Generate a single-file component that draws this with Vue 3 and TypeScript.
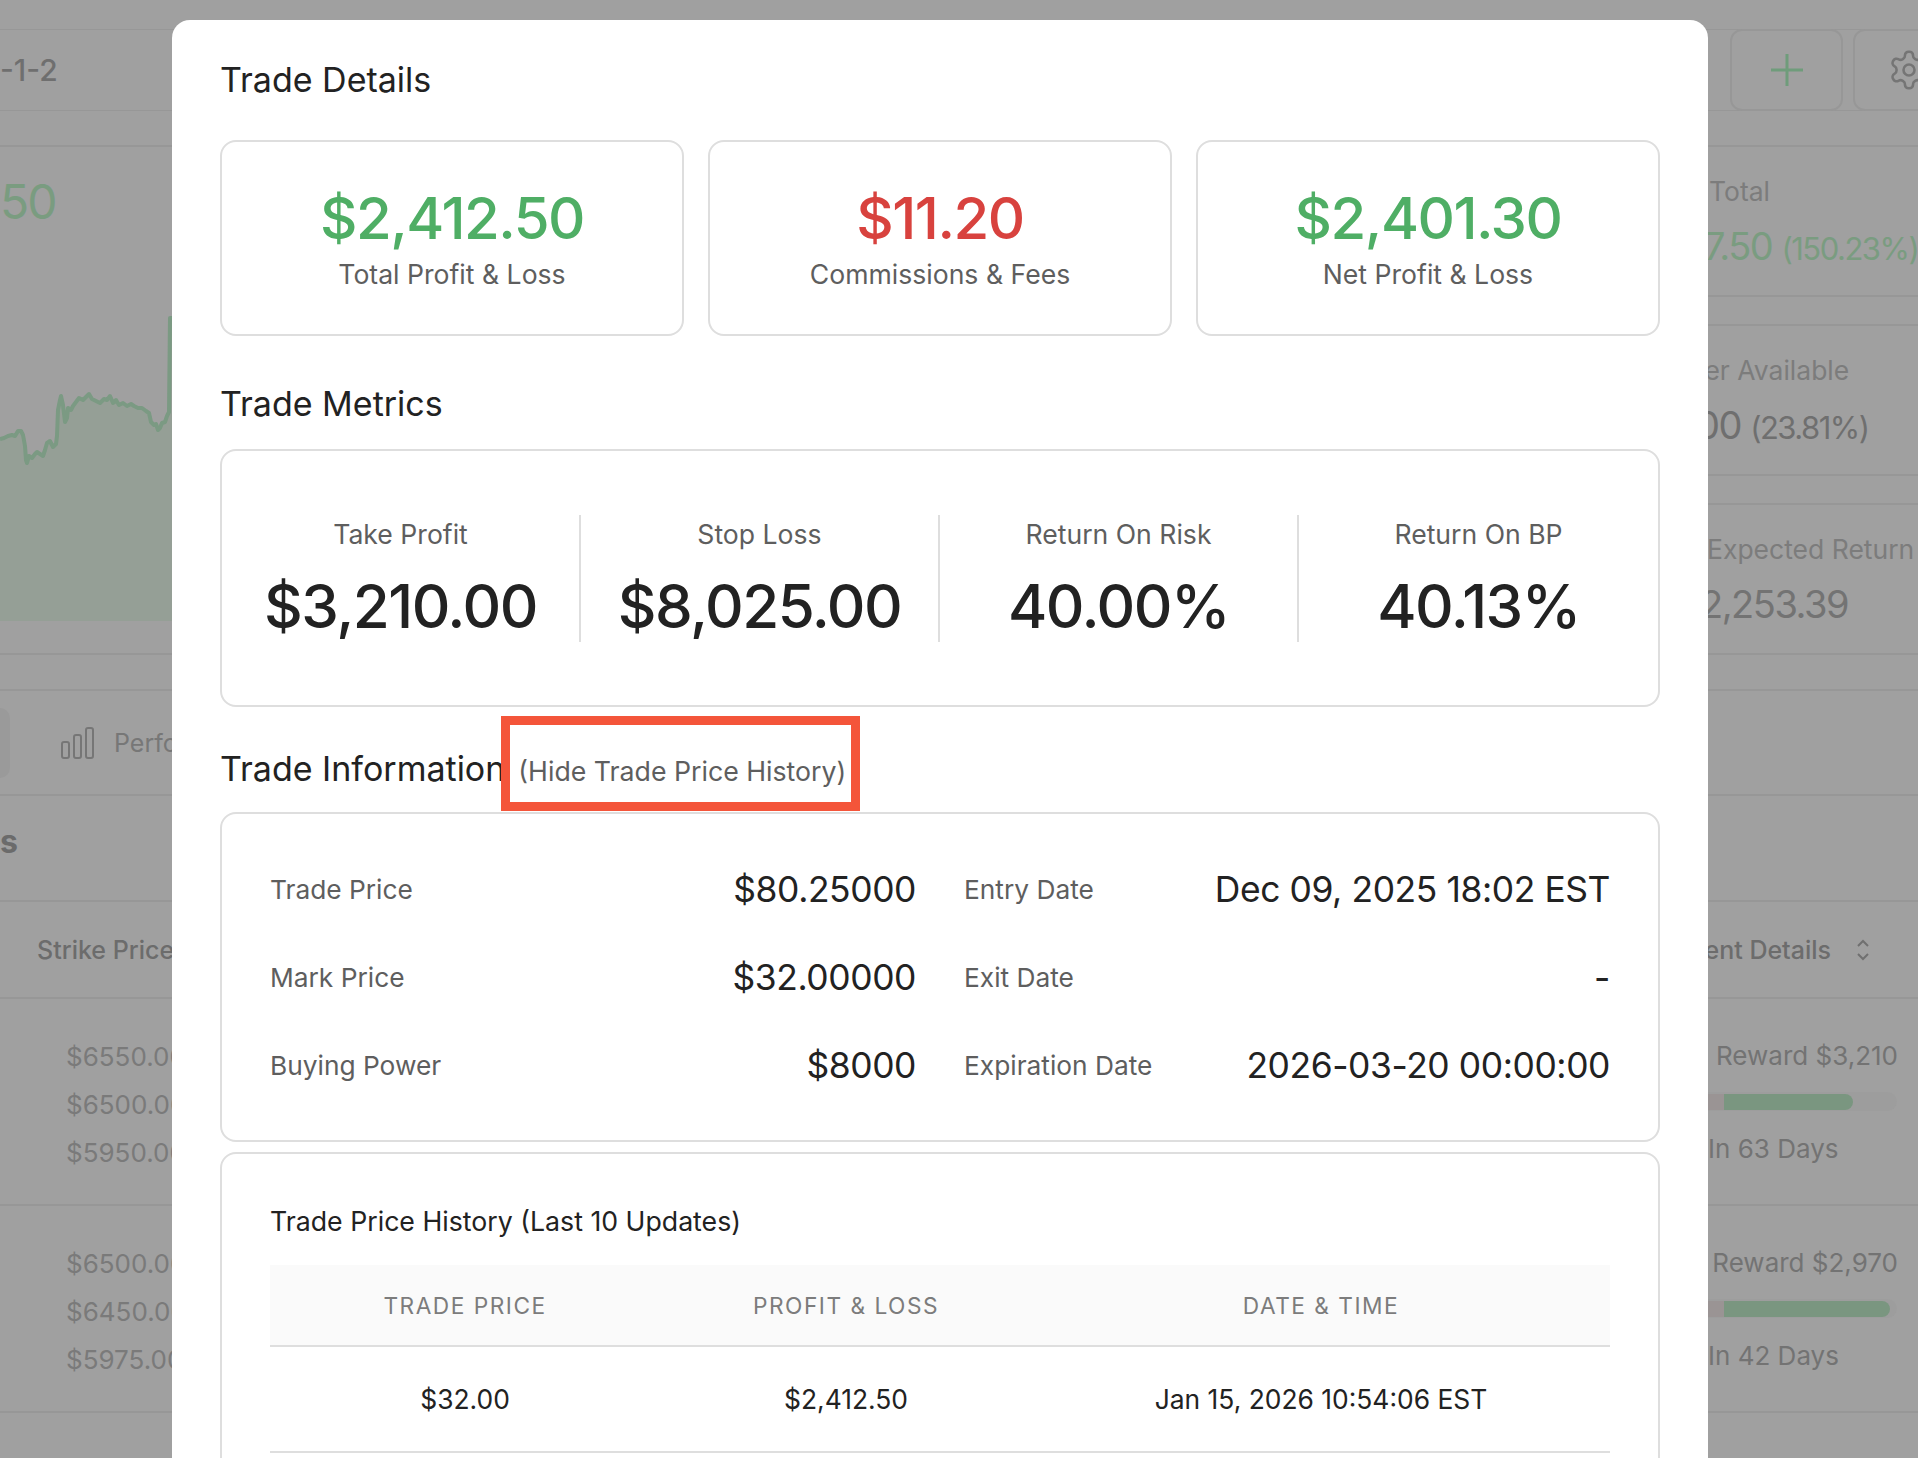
<script setup lang="ts">
interface Stat { label: string; value: string; note?: string; tone: string }
const summary = [
  { value: '$2,412.50', label: 'Total Profit & Loss', tone: 'green' },
  { value: '$11.20', label: 'Commissions & Fees', tone: 'red' },
  { value: '$2,401.30', label: 'Net Profit & Loss', tone: 'green' },
]
const metrics = [
  { label: 'Take Profit', value: '$3,210.00' },
  { label: 'Stop Loss', value: '$8,025.00' },
  { label: 'Return On Risk', value: '40.00%' },
  { label: 'Return On BP', value: '40.13%' },
]
const info = [
  { label: 'Trade Price', value: '$80.25000' },
  { label: 'Entry Date', value: 'Dec 09, 2025 18:02 EST' },
  { label: 'Mark Price', value: '$32.00000' },
  { label: 'Exit Date', value: '-' },
  { label: 'Buying Power', value: '$8000' },
  { label: 'Expiration Date', value: '2026-03-20 00:00:00' },
]
const stats: Stat[] = [
  { label: 'Total', value: '7.50', note: '(150.23%)', tone: 'stat-a' },
  { label: 'Power Available', value: '00', note: '(23.81%)', tone: 'stat-b' },
  { label: 'Expected Return', value: '2,253.39', tone: 'stat-c' },
]
const strikes = [
  ['$6550.00', '$6500.00', '$5950.00'],
  ['$6500.00', '$6450.00', '$5975.00'],
]
const rewards = [
  { reward: 'Reward $3,210', days: 'In 63 Days', fill: 129 },
  { reward: 'Reward $2,970', days: 'In 42 Days', fill: 166 },
]
const linePts = '0,439 4,438 8,436 12,435 15,436 18,431 21,431 23,435 25,446 26,460 27,463 29,456 32,458 35,454 37,452 40,454 43,456 45,450 47,443 50,441 53,447 56,444 57,436 58,410 60,400 61,396 63,405 65,422 67,418 68,408 71,410 73,406 76,402 79,398 83,400 86,397 89,394 92,399 96,401 100,403 104,399 107,400 110,396 113,403 116,400 119,405 123,403 127,406 131,404 134,406 138,408 142,408 146,411 149,413 151,422 154,425 156,424 158,430 160,428 162,423 165,422 167,416 169,412 170,318 172,318'
const fillPts = `${linePts} 172,621 0,621`
</script>

<template>
  <div class="page">
    <div class="backdrop">
      <header class="topbar">
        <div class="crumb">-1-2</div>
        <div class="tools">
          <div class="tool">
            <svg width="36" height="36" viewBox="0 0 36 36"><path d="M18 2v32M2 18h32" fill="none" stroke="#6f9c7b" stroke-width="3" /></svg>
          </div>
          <div class="tool gear">
            <svg width="44" height="44" viewBox="0 0 24 24" fill="none" stroke="#757575" stroke-width="1.4" stroke-linecap="round" stroke-linejoin="round"><path d="M12.2 2h-.4a2 2 0 0 0-2 2v.2a2 2 0 0 1-1 1.7l-.4.3a2 2 0 0 1-2 0l-.2-.1a2 2 0 0 0-2.7.7l-.2.4a2 2 0 0 0 .7 2.7l.2.1a2 2 0 0 1 1 1.7v.5a2 2 0 0 1-1 1.8l-.2.1a2 2 0 0 0-.7 2.7l.2.4a2 2 0 0 0 2.7.7l.2-.1a2 2 0 0 1 2 0l.4.3a2 2 0 0 1 1 1.7v.2a2 2 0 0 0 2 2h.4a2 2 0 0 0 2-2v-.2a2 2 0 0 1 1-1.7l.4-.3a2 2 0 0 1 2 0l.2.1a2 2 0 0 0 2.7-.7l.2-.4a2 2 0 0 0-.7-2.7l-.2-.1a2 2 0 0 1-1-1.8v-.5a2 2 0 0 1 1-1.7l.2-.1a2 2 0 0 0 .7-2.7l-.2-.4a2 2 0 0 0-2.7-.7l-.2.1a2 2 0 0 1-2 0l-.4-.3a2 2 0 0 1-1-1.7V4a2 2 0 0 0-2-2z" /><circle cx="12" cy="12" r="3" /></svg>
          </div>
        </div>
      </header>

      <section class="overview">
        <div class="chart-panel">
          <div class="hero">50</div>
          <svg class="chart" width="172" height="476" viewBox="0 145 172 476">
            <polygon :points="fillPts" fill="#959f96" />
            <polyline :points="linePts" fill="none" stroke="#7b9a83" stroke-width="4" stroke-linejoin="round" />
          </svg>
        </div>
        <div class="stats">
          <div v-for="s in stats" :key="s.label" class="stat" :class="s.tone">
            <div class="stat-label">{{ s.label }}</div>
            <div class="stat-value">{{ s.value }} <span v-if="s.note" class="stat-note">{{ s.note }}</span></div>
          </div>
        </div>
      </section>

      <nav class="tabs">
        <div class="tab-active"></div>
        <svg class="tab-icon" width="33" height="32" viewBox="0 0 33 32" fill="none" stroke="#767676" stroke-width="2"><rect x="1" y="15" width="7" height="16" rx="2" /><rect x="13" y="8" width="7" height="23" rx="2" /><rect x="25" y="1" width="7" height="30" rx="2" /></svg>
        <span class="tab-text">Performance</span>
      </nav>

      <div class="section-row">s</div>

      <div class="table-head">
        <span class="th-left">Strike Price</span>
        <span class="th-right">ent Details
          <svg width="16" height="24" viewBox="0 0 16 24" fill="none" stroke="#707070" stroke-width="2"><path d="M3 8l5-5 5 5M3 16l5 5 5-5" /></svg>
        </span>
      </div>

      <div v-for="(row, i) in strikes" :key="i" class="pos-row">
        <div class="strikes">
          <div v-for="(p, j) in row" :key="j">{{ p }}</div>
        </div>
        <div class="reward">
          <div class="reward-text">{{ rewards[i].reward }}</div>
          <div class="track"><span class="pink"></span><span class="fill" :style="{ width: rewards[i].fill + 'px' }"></span></div>
          <div class="days">{{ rewards[i].days }}</div>
        </div>
      </div>
    </div>

    <main class="modal">
      <h2 class="title first">Trade Details</h2>
      <div class="summary">
        <div v-for="c in summary" :key="c.label" class="card sum-card">
          <div class="big" :class="c.tone">{{ c.value }}</div>
          <div class="sum-label">{{ c.label }}</div>
        </div>
      </div>

      <h2 class="title metrics-title">Trade Metrics</h2>
      <div class="card metrics">
        <div v-for="m in metrics" :key="m.label" class="metric">
          <div class="metric-label">{{ m.label }}</div>
          <div class="big">{{ m.value }}</div>
        </div>
      </div>

      <div class="info-head">
        <h2 class="title">Trade Information</h2>
        <span class="toggle">(Hide Trade Price History)</span>
        <div class="annotation"></div>
      </div>
      <div class="card info">
        <div v-for="r in info" :key="r.label" class="info-row">
          <span class="info-label">{{ r.label }}</span>
          <span class="info-value">{{ r.value }}</span>
        </div>
      </div>

      <div class="card history">
        <div class="history-title">Trade Price History (Last 10 Updates)</div>
        <div class="grid-row grid-head">
          <span>TRADE PRICE</span><span>PROFIT &amp; LOSS</span><span>DATE &amp; TIME</span>
        </div>
        <div class="grid-row grid-body">
          <span>$32.00</span><span>$2,412.50</span><span>Jan 15, 2026 10:54:06 EST</span>
        </div>
      </div>
    </main>
  </div>
</template>

<style>
html, body { margin: 0; background: #a0a0a0; }
</style>

<style scoped>
.page {
  position: relative;
  width: 1918px;
  height: 1458px;
  overflow: hidden;
  background: #a0a0a0;
  font-family: Inter, Roboto, sans-serif;
  color: #707070;
}
.backdrop { padding-top: 29px; }
.topbar {
  display: flex;
  justify-content: space-between;
  align-items: center;
  height: 80px;
  border-top: 1px solid #979797;
  border-bottom: 1px solid #979797;
}
.crumb { font-size: 30px; font-weight: 500; color: #6f6f6f; }
.tools { display: flex; gap: 10px; margin-right: -48px; }
.tool {
  width: 113px;
  height: 82px;
  border: 2px solid #979797;
  border-radius: 12px;
  box-sizing: border-box;
  display: flex;
  align-items: center;
  justify-content: center;
}
.gear { justify-content: flex-start; padding-left: 32px; }
.overview {
  display: flex;
  justify-content: space-between;
  height: 510px;
  margin-top: 34px;
}
.chart-panel {
  position: relative;
  flex: 1;
  border-top: 2px solid #979797;
  border-bottom: 2px solid #979797;
  box-sizing: border-box;
  height: 510px;
}
.hero {
  font-size: 48px;
  font-weight: 400;
  line-height: 56px;
  margin-top: 27px;
  letter-spacing: -2px;
  color: #7a9c80;
}
.chart { position: absolute; left: 0; top: -2px; }
.stats {
  width: 210px;
  display: flex;
  flex-direction: column;
  gap: 27px;
  white-space: nowrap;
}
.stat {
  flex: 1;
  border-top: 2px solid #979797;
  border-bottom: 2px solid #979797;
  padding-top: 28px;
}
.stat-label { font-size: 26.5px; line-height: 32px; color: #7c7c7c; }
.stat-value { font-size: 38px; line-height: 48px; margin-top: 15px; color: #6f6f6f; letter-spacing: -1.5px; }
.stat-note { font-size: 31px; letter-spacing: -1.5px; }
.stat-a .stat-label { margin-left: 1px; }
.stat-a .stat-value, .stat-a .stat-note { color: #7a9c80; }
.stat-a .stat-value { margin-left: -4px; }
.stat-b .stat-label { margin-left: -57px; }
.stat-b .stat-value { margin-left: -12px; }
.stat-c .stat-label { margin-left: -1px; }
.stat-c .stat-value { margin-left: -8px; color: #737373; }
.tabs {
  display: flex;
  align-items: center;
  height: 107px;
  margin-top: 34px;
  border-top: 2px solid #979797;
  border-bottom: 2px solid #979797;
  box-sizing: border-box;
}
.tab-active {
  width: 10px;
  height: 70px;
  background: #9a9a9a;
  border-radius: 0 14px 14px 0;
}
.tab-icon { margin-left: 51px; }
.tab-text { margin-left: 20px; font-size: 25px; color: #777; }
.section-row {
  height: 106px;
  line-height: 92px;
  font-size: 32px;
  font-weight: 700;
  color: #6b6b6b;
  border-bottom: 2px solid #979797;
  box-sizing: border-box;
}
.table-head {
  display: flex;
  justify-content: space-between;
  align-items: center;
  height: 97px;
  border-bottom: 2px solid #979797;
  box-sizing: border-box;
  font-size: 25px;
  font-weight: 500;
  color: #6c6c6c;
}
.th-left { margin-left: 37px; }
.th-right { display: flex; align-items: center; gap: 24px; margin-right: 47px; }
.pos-row {
  display: flex;
  justify-content: space-between;
  height: 207px;
  border-bottom: 2px solid #979797;
  box-sizing: border-box;
}
.strikes {
  padding: 34px 0 0 66px;
  font-size: 26px;
  line-height: 48px;
  color: #7a7a7a;
}
.reward { width: 210px; padding-top: 41px; box-sizing: border-box; }
.reward-text { font-size: 26px; line-height: 32px; text-align: right; padding-right: 20px; color: #737373; white-space: nowrap; }
.track {
  display: flex;
  align-items: center;
  height: 19px;
  margin: 20px 21px 0 0;
  background: #9d9d9d;
  border-radius: 0 10px 10px 0;
}
.pink { width: 16px; height: 16px; background: #9a9494; }
.fill { height: 16px; background: #7a9680; border-radius: 0 8px 8px 0; }
.days { font-size: 26px; line-height: 32px; margin-top: 22px; color: #737373; }

.modal {
  position: absolute;
  left: 172px;
  top: 20px;
  width: 1536px;
  height: 1500px;
  padding: 40px 48px 0;
  box-sizing: border-box;
  background: #fff;
  border-radius: 18px 18px 0 0;
  color: #222;
}
.title {
  margin: 41px 0 25px;
  font-size: 34px;
  font-weight: 400;
  line-height: 40px;
  color: #222;
}
.title.first { margin: 0 0 40px; }
.title.metrics-title { margin-top: 48px; }
.card {
  border: 2px solid #dedede;
  border-radius: 16px;
  box-sizing: border-box;
  background: #fff;
}
.summary { display: grid; grid-template-columns: repeat(3, 1fr); gap: 24px; }
.sum-card {
  height: 196px;
  display: flex;
  flex-direction: column;
  align-items: center;
  padding-top: 41px;
}
.big { font-size: 58px; font-weight: 500; line-height: 70px; letter-spacing: -1.5px; color: #222; }
.big.green { color: #4fae65; }
.big.red { color: #d8423e; }
.sum-label { font-size: 26.6px; line-height: 32px; margin-top: 5px; color: #5e5e5e; }
.metrics {
  display: grid;
  grid-template-columns: repeat(4, 1fr);
  height: 258px;
  align-items: center;
}
.metric {
  height: 127px;
  text-align: center;
  border-right: 2px solid #dedede;
  box-sizing: border-box;
}
.metric:last-child { border-right: none; }
.metric-label { font-size: 26.6px; line-height: 32px; margin-top: 3px; color: #5e5e5e; }
.metric .big { margin-top: 21px; font-size: 60px; }
.info-head {
  position: relative;
  display: flex;
  align-items: baseline;
  gap: 13px;
}
.info-head .title { margin-top: 42px; margin-bottom: 23px; }
.toggle { font-size: 26.7px; color: #5e5e5e; }
.annotation {
  position: absolute;
  left: 281px;
  top: 9px;
  width: 359px;
  height: 95px;
  box-sizing: border-box;
  border: 9px solid #f4553a;
}
.info {
  display: grid;
  grid-template-columns: 1fr 1fr;
  column-gap: 48px;
  height: 330px;
  padding: 31px 48px;
}
.info-row {
  display: flex;
  justify-content: space-between;
  align-items: center;
  height: 88px;
}
.info-label { font-size: 26.3px; color: #5e5e5e; }
.info-value { font-size: 35.4px; letter-spacing: -0.4px; color: #222; }
.history { margin-top: 10px; padding: 0 48px; height: 400px; }
.history-title { font-size: 26.7px; line-height: 32px; margin-top: 51px; color: #222; }
.grid-row {
  display: grid;
  grid-template-columns: 390px 372px 1fr;
  text-align: center;
  align-items: center;
}
.grid-head {
  margin-top: 28px;
  height: 82px;
  background: #fafafa;
  border-bottom: 2px solid #dedede;
  font-size: 22.7px;
  letter-spacing: 1.5px;
  color: #7c7c7c;
  box-sizing: border-box;
}
.grid-body {
  height: 106px;
  border-bottom: 2px solid #dedede;
  box-sizing: border-box;
  font-size: 26.4px;
  color: #222;
}
</style>
